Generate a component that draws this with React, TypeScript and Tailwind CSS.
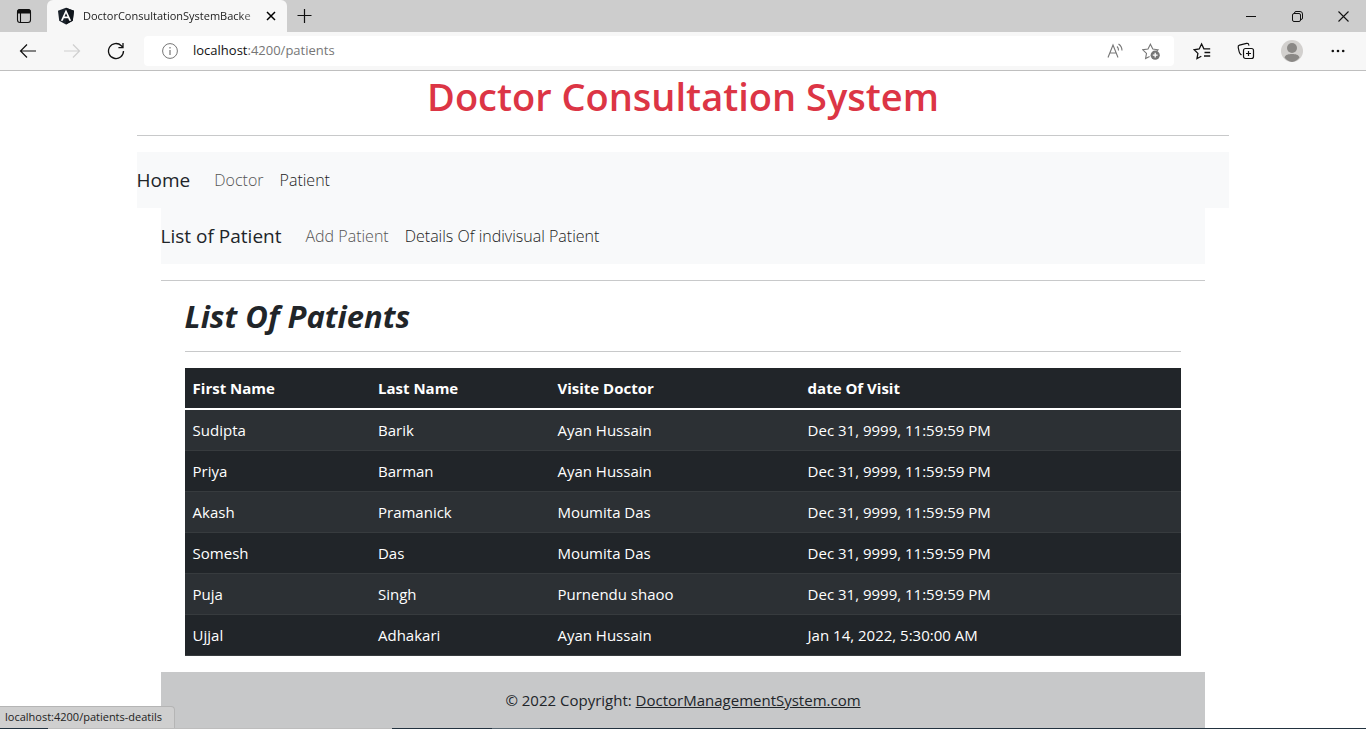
import React from "react";

const patients = [
  ["Sudipta", "Barik", "Ayan Hussain", "Dec 31, 9999, 11:59:59 PM"],
  ["Priya", "Barman", "Ayan Hussain", "Dec 31, 9999, 11:59:59 PM"],
  ["Akash", "Pramanick", "Moumita Das", "Dec 31, 9999, 11:59:59 PM"],
  ["Somesh", "Das", "Moumita Das", "Dec 31, 9999, 11:59:59 PM"],
  ["Puja", "Singh", "Purnendu shaoo", "Dec 31, 9999, 11:59:59 PM"],
  ["Ujjal", "Adhakari", "Ayan Hussain", "Jan 14, 2022, 5:30:00 AM"],
];

const line = { fill: "none", stroke: "currentColor" } as const;

function TabStrip() {
  return (
    <div className="flex h-8 items-stretch bg-[#cdcdcd]">
      <button aria-label="Tab actions" className="flex w-[47px] items-center justify-center text-[#111]">
        <svg width="16" height="16" viewBox="0 0 16 16" {...line}>
          <rect x="1.5" y="1.5" width="13" height="13" rx="2.5" strokeWidth="1.1" />
          <path d="M1.5 5V4a2.5 2.5 0 0 1 2.5-2.5h8A2.500 2.500 0 0 1 14.500 4v1z" fill="currentColor" />
          <path d="M4.500 5v9.500" strokeWidth="1.1" />
        </svg>
      </button>
      <div className="flex w-[240px] items-center rounded-t-md bg-[#f7f7f7] pr-1.5 pl-2.5">
        <svg width="18" height="18" viewBox="0 0 18 18" className="shrink-0">
          <path d="M9 .8l8 2.900-1.200 10L9 17.500l-6.800-3.800L1 3.700z" fill="#1b222b" />
          <path d="M9 .8l8 2.900-1.200 10L9 17.500z" fill="#10151c" />
          <path d="M9 2.600l5.200 11.100h-2l-1-2.500H6.800l-1 2.500h-2zM9 6.200L7.500 9.600h3z" fill="#fff" fillRule="evenodd" />
        </svg>
        <span className="ml-2 flex-1 whitespace-nowrap text-[11px] text-[#222] [mask-image:linear-gradient(to_right,black_88%,rgba(0,0,0,0.3))]">
          DoctorConsultationSystemBacke
        </span>
        <button aria-label="Close tab" className="flex size-5 shrink-0 items-center justify-center text-black">
          <svg width="10" height="10" viewBox="0 0 10 10" {...line}>
            <path d="M1 1l8 8M9 1l-8 8" strokeWidth="1.500" />
          </svg>
        </button>
      </div>
      <button aria-label="New tab" className="flex w-9 items-center justify-center text-[#111]">
        <svg width="16" height="16" viewBox="0 0 16 16" {...line}>
          <path d="M7.500 1v14M.5 7.500h14" strokeWidth="1.200" />
        </svg>
      </button>
      <div className="ml-auto flex text-[#111]">
        <button aria-label="Minimize" className="flex w-[46px] items-center justify-center">
          <svg width="10" height="10" viewBox="0 0 10 10" {...line}><path d="M0 5.500h10" /></svg>
        </button>
        <button aria-label="Restore" className="flex w-[46px] items-center justify-center">
          <svg width="11" height="11" viewBox="0 0 11 11" {...line}>
            <rect x="0.500" y="2.500" width="8" height="8" rx="1.500" />
            <path d="M2.500 2.300V2A1.500 1.500 0 0 1 4 .5h4A2.500 2.500 0 0 1 10.500 3v4A1.500 1.500 0 0 1 9 8.500h-.3" />
          </svg>
        </button>
        <button aria-label="Close window" className="flex w-[46px] items-center justify-center">
          <svg width="11" height="11" viewBox="0 0 11 11" {...line}><path d="M.5.5l10 10M10.500.5l-10 10" strokeWidth="1.100" /></svg>
        </button>
      </div>
    </div>
  );
}

function Toolbar() {
  return (
    <div className="flex h-[39px] items-center border-b border-[#bfbfbf] bg-[#f7f7f7] text-[#111]">
      <div className="flex w-36 shrink-0 items-center pl-1.5">
        <button aria-label="Back" className="flex w-11 justify-center">
          <svg width="18" height="16" viewBox="0 0 18 16" {...line} strokeWidth="1.200">
            <path d="M17 8H1.500M8 1.500L1.500 8 8 14.500" />
          </svg>
        </button>
        <button aria-label="Forward" disabled className="flex w-11 justify-center text-[#cfcfcf]">
          <svg width="18" height="16" viewBox="0 0 18 16" {...line} strokeWidth="1.200">
            <path d="M1 8h15.500M10 1.500L16.500 8 10 14.500" />
          </svg>
        </button>
        <button aria-label="Refresh" className="flex w-11 justify-center">
          <svg width="18" height="18" viewBox="0 0 18 18" {...line} strokeWidth="1.300">
            <path d="M16.500 9a7.500 7.500 0 1 1-2.200-5.300L15.800 5.500M16 1v4.600h-4.600" />
          </svg>
        </button>
      </div>
      <div className="flex h-[30px] min-w-0 flex-1 items-center rounded bg-white px-[18px]">
        <svg width="16" height="16" viewBox="0 0 16 16" {...line} className="shrink-0 text-[#767676]">
          <circle cx="8" cy="8" r="7.400" />
          <path d="M8 7v5M8 4v1.500" strokeWidth="1.200" />
        </svg>
        <span className="ml-[15px] flex-1 text-[13px] text-[#767676]">
          <span className="text-[#111]">localhost</span>:4200/patients
        </span>
        <button aria-label="Read aloud" className="mr-[18px] text-[#767676]">
          <svg width="18" height="18" viewBox="0 0 18 18" {...line}>
            <path d="M2 15.500L7 3l5 12.500M3.800 11h6.400" strokeWidth="1.100" />
            <path d="M11 4.500a5 5 0 0 1 1.500 4M12.500 2a8 8 0 0 1 3.500 6.500" strokeWidth="1.100" />
          </svg>
        </button>
        <button aria-label="Add to favorites" className="-mr-1 text-[#767676]">
          <svg width="18" height="18" viewBox="0 0 18 18" {...line}>
            <path d="M7.600 14.400L3.600 16.500l.9-5.100L.8 7.800l5.200-.8L8.400 2.200 10.800 7l5.200.8-1.300 1.200" strokeWidth="1.100" />
            <circle cx="13.200" cy="13.200" r="4.600" fill="currentColor" stroke="none" />
            <path d="M13.200 10.800v4.800M10.800 13.200h4.800" stroke="#fff" strokeWidth="1.300" />
          </svg>
        </button>
      </div>
      <div className="ml-1.5 flex w-[186px] shrink-0 items-center">
        <button aria-label="Favorites" className="flex w-11 justify-center">
          <svg width="18" height="18" viewBox="0 0 18 18" {...line} strokeWidth="1.300">
            <path d="M8.300 14.200l-4.300 2.300.9-5.100L1.200 7.800l5-.8L8.600 2l2.300 4.900h6.300M11.500 10.500h5.700M11 14h6.200" />
          </svg>
        </button>
        <button aria-label="Collections" className="flex w-11 justify-center">
          <svg width="18" height="18" viewBox="0 0 18 18" {...line} strokeWidth="1.200">
            <rect x="6.500" y="6.500" width="10" height="10" rx="2" />
            <path d="M11.500 9v5M9 11.500h5M4.500 13l-.9-.8a5 5 0 0 1-1.500-2.700L1.200 5.300A1.800 1.800 0 0 1 2.500 3.200l7-1.800a1.800 1.800 0 0 1 2.200 1.300l.3 1" />
          </svg>
        </button>
        <button aria-label="Profile" className="flex w-12 justify-center">
          <svg width="22" height="22" viewBox="0 0 22 22">
            <circle cx="11" cy="11" r="11" fill="#d2d0ce" />
            <circle cx="11" cy="8" r="5" fill="#8a8886" />
            <path d="M3.500 17.500c1-3 4-3.500 7.500-3.500s6.500.5 7.500 3.500A11 11 0 0 1 11 22a11 11 0 0 1-7.500-4.500z" fill="#8a8886" />
          </svg>
        </button>
        <button aria-label="Settings and more" className="flex w-11 justify-center">
          <svg width="14" height="4" viewBox="0 0 14 4" fill="currentColor">
            <circle cx="1.800" cy="2" r="1.300" /><circle cx="7" cy="2" r="1.300" /><circle cx="12.200" cy="2" r="1.300" />
          </svg>
        </button>
      </div>
    </div>
  );
}

function NavBar({ brand, links }: { brand: string; links: { label: string; active: boolean }[] }) {
  return (
    <nav className="flex h-14 items-center bg-[#f8f9fa]">
      <a href="#" className="mr-4 text-[19px] text-[#212529]">{brand}</a>
      {links.map((l) => (
        <a
          key={l.label}
          href="#"
          className={l.active ? "px-2 text-base font-light text-[#222]" : "px-2 text-base font-light text-[#555]"}
        >
          {l.label}
        </a>
      ))}
    </nav>
  );
}

export default function App() {
  return (
    <div className="flex min-h-screen flex-col bg-white font-['Open_Sans','Noto_Sans',sans-serif] text-[#212529]">
      <TabStrip />
      <Toolbar />
      <main className="mx-auto w-4/5">
        <h1 className="mt-px text-center text-[38px] leading-12 font-semibold text-[#dc3545]">Doctor Consultation System</h1>
        <hr className="mt-[15px] mb-4 border-[#c8c9ca]" />
        <NavBar brand="Home" links={[{ label: "Doctor", active: false }, { label: "Patient", active: true }]} />
        <div className="px-6">
          <NavBar
            brand="List of Patient"
            links={[{ label: "Add Patient", active: false }, { label: "Details Of indivisual Patient", active: true }]}
          />
          <hr className="my-4 border-[#c8c9ca]" />
          <div className="px-6">
            <h2 className="text-[31px] leading-[38px] font-bold italic">List Of Patients</h2>
            <hr className="my-4 border-[#c8c9ca]" />
            <table className="w-full table-fixed border-collapse bg-[#212529] text-left text-[15px] leading-6 text-white">
              <colgroup>
                <col className="w-[18.600%]" />
                <col className="w-[18%]" />
                <col className="w-[25.100%]" />
                <col />
              </colgroup>
              <thead>
                <tr className="border-b-2 border-white">
                  {["First Name", "Last Name", "Visite Doctor", "date Of Visit"].map((h) => (
                    <th key={h} className="p-2 font-bold">{h}</th>
                  ))}
                </tr>
              </thead>
              <tbody>
                {patients.map((row) => (
                  <tr key={row[0]} className="border-b border-[#373b3e] odd:bg-[#2c3034]">
                    {row.map((cell, i) => (
                      <td key={i} className="p-2">{cell}</td>
                    ))}
                  </tr>
                ))}
              </tbody>
            </table>
          </div>
          <footer className="mt-4 bg-[#c7c8c9] p-4 text-center text-[15px] leading-6">
            © 2022 Copyright: <a href="#" className="underline">DoctorManagementSystem.com</a>
          </footer>
        </div>
      </main>
      <div className="fixed inset-x-0 bottom-0">
        <div className="flex h-[22px] w-fit items-center rounded-tr border-t border-r border-[#b5b5b5] bg-[#cfcfcf] pr-3 pl-[5px] text-[11px] text-[#222]">
          localhost:4200/patients-deatils
        </div>
        <div className="flex h-px bg-[#22323f]">
          <div className="w-12" />
          <div className="w-[344px] bg-[#bdbdbd]" />
          <div className="w-[100px]" />
          <div className="w-12 bg-[#5a6872]" />
        </div>
      </div>
    </div>
  );
}
